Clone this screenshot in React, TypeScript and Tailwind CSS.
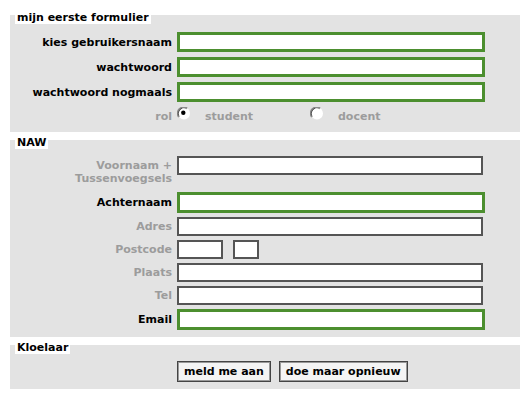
import React from 'react';

const font = { fontFamily: '"DejaVu Sans", Verdana, sans-serif' };

function Radio({ checked }: { checked?: boolean }) {
  return (
    <svg width="14" height="13" viewBox="0 0 14 13" className="block">
      <circle cx="7" cy="6.5" r="6" fill="#fff" />
      <path d="M2 10 A6 6 0 0 1 10 1.3" fill="none" stroke="#8a8a8a" strokeWidth="2" />
      <path d="M1.5 8.5 A6 6 0 0 1 5 1.2" fill="none" stroke="#555" strokeWidth="1" />
      {checked && <circle cx="6.3" cy="5.8" r="2.2" fill="#000" />}
    </svg>
  );
}

function Legend({ children }: { children: React.ReactNode }) {
  return (
    <div className="-mt-[3px] ml-[5px] h-[12px] w-fit bg-white px-[2px] text-[11px] font-bold leading-[12px] text-black">
      {children}
    </div>
  );
}

function Row({
  label,
  gray,
  green,
  className,
  children,
}: {
  label: React.ReactNode;
  gray?: boolean;
  green?: boolean;
  className?: string;
  children?: React.ReactNode;
}) {
  return (
    <div className={`flex items-center ${className ?? ''}`}>
      <div
        className={`w-[167px] pr-[5px] text-right text-[11px] font-bold leading-[13px] ${
          gray ? 'text-[#9c9c9c]' : 'text-black'
        }`}
      >
        {label}
      </div>
      {children ??
        (green ? (
          <input className="h-[20px] w-[308px] border-[3px] border-[#4c8f2f] bg-white outline-none" />
        ) : (
          <input className="h-[19px] w-[306px] border-2 border-[#555] bg-white outline-none" />
        ))}
    </div>
  );
}

export default function App() {
  return (
    <div className="min-h-[399px] w-[529px] bg-white pt-[15px]" style={font}>
      {/* panel 1 */}
      <div className="mx-[10px] flow-root w-[510px] bg-[#e3e3e3] pb-[7px]">
        <Legend>mijn eerste formulier</Legend>
        <Row label="kies gebruikersnaam" green className="mt-[8px]" />
        <Row label="wachtwoord" green className="mt-[5px]" />
        <Row label="wachtwoord nogmaals" green className="mt-[5px]" />
        <div className="mt-[3px] flex h-[20px]">
          <div className="w-[167px] pr-[5px] pt-[2px] text-right text-[11px] font-bold leading-[20px] text-[#9c9c9c]">rol</div>
          <div className="flex w-[133px]">
            <div className="mt-[2px]">
              <Radio checked />
            </div>
            <span className="ml-[14px] pt-[2px] text-[11px] font-bold leading-[20px] text-[#9c9c9c]">student</span>
          </div>
          <div className="flex">
            <div className="mt-[2px]">
              <Radio />
            </div>
            <span className="ml-[14px] pt-[2px] text-[11px] font-bold leading-[20px] text-[#9c9c9c]">docent</span>
          </div>
        </div>
      </div>

      {/* panel 2 */}
      <div className="mx-[10px] mt-[8px] flow-root w-[510px] bg-[#e3e3e3] pb-[7px]">
        <Legend>NAW</Legend>
        <div className="mt-[7px] flex items-start">
          <div className="w-[167px] pr-[5px] pt-[3px] text-right text-[11px] font-bold leading-[13px] text-[#9c9c9c]">
            Voornaam +<br />
            Tussenvoegsels
          </div>
          <input className="h-[19px] w-[306px] border-2 border-[#555] bg-white outline-none" />
        </div>
        <Row label="Achternaam" className="mt-[7px]">
          <input className="h-[21px] w-[308px] border-[3px] border-[#4c8f2f] bg-white outline-none" />
        </Row>
        <Row label="Adres" gray className="mt-[4px]" />
        <Row label="Postcode" gray className="mt-[4px]">
          <div className="flex gap-[10px]">
            <input className="h-[19px] w-[46px] border-2 border-[#555] bg-white outline-none" />
            <input className="h-[19px] w-[26px] border-2 border-[#555] bg-white outline-none" />
          </div>
        </Row>
        <Row label="Plaats" gray className="mt-[4px]" />
        <Row label="Tel" gray className="mt-[4px]" />
        <Row label="Email" className="mt-[4px]">
          <input className="h-[21px] w-[308px] border-[3px] border-[#4c8f2f] bg-white outline-none" />
        </Row>
      </div>

      {/* panel 3 */}
      <div className="mx-[10px] mt-[8px] flow-root w-[510px] bg-[#e3e3e3] pb-[7px]">
        <Legend>Kloelaar</Legend>
        <div className="mt-[7px] flex gap-[8px] pl-[167px]">
          <button className="h-[21px] border border-[#444] bg-[#f4f4f4] px-[6px] text-[11px] font-bold leading-[17px] text-black shadow-[inset_0_0_0_1px_#999]">
            meld me aan
          </button>
          <button className="h-[21px] border border-[#444] bg-[#f4f4f4] px-[6px] text-[11px] font-bold leading-[17px] text-black shadow-[inset_0_0_0_1px_#999]">
            doe maar opnieuw
          </button>
        </div>
      </div>
    </div>
  );
}
